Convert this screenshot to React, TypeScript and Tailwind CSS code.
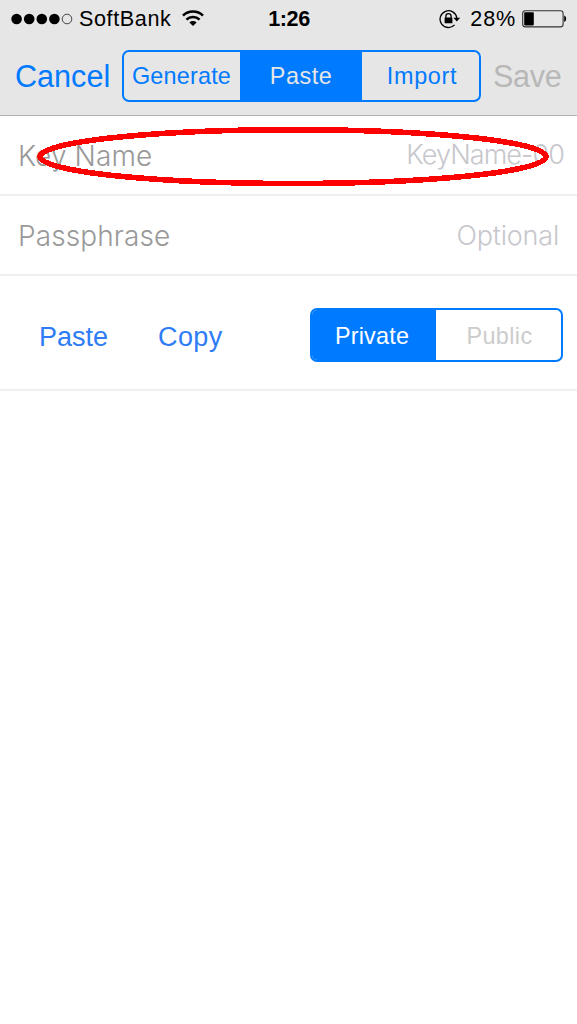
import React from 'react';

interface SegmentProps {
  label: string;
  className: string;
}

const Segment: React.FC<SegmentProps> = ({ label, className }) => (
  <button className={`flex h-full items-center justify-center text-[23.4px] ${className}`}>
    {label}
  </button>
);

const StatusBar: React.FC = () => (
  <div className="grid h-[38px] grid-cols-3 items-center pl-[11px] pr-[10px] text-[21.6px] text-black">
    {/* Carrier */}
    <div className="flex items-center">
      <svg width="62" height="12" viewBox="0 0 62 12" className="shrink-0">
        <circle cx="5.6" cy="6" r="5.3" />
        <circle cx="18.2" cy="6" r="5.3" />
        <circle cx="30.8" cy="6" r="5.3" />
        <circle cx="43.4" cy="6" r="5.3" />
        <circle cx="56" cy="6" r="4.8" fill="none" stroke="#333" strokeWidth="0.9" />
      </svg>
      <span className="ml-[6px] pt-px tracking-[0.6px]">SoftBank</span>
      <svg width="22" height="17" viewBox="0 0 22 17" className="ml-[11px] shrink-0" fill="none" stroke="#000" strokeWidth="2.5">
        <path d="M1 5.6a14.3 14.3 0 0 1 20 0" />
        <path d="M4.4 9.6a9.4 9.4 0 0 1 13.2 0" />
        <path d="M7.4 12.4a5.2 5.2 0 0 1 7.2 0L11 16z" fill="#000" stroke="none" />
      </svg>
    </div>

    <span className="pt-px text-center font-bold tracking-[-0.4px]">1:26</span>

    {/* Rotation lock and battery */}
    <div className="flex items-center justify-end">
      <svg width="22" height="20" viewBox="0 0 22 20" className="shrink-0" fill="none" stroke="#000">
        <path d="M15.6 15.9A8.4 8.4 0 1 1 17.8 9" strokeWidth="1.3" />
        <path d="M14.4 8.8h6.8l-3.4 3.6z" fill="#000" stroke="none" />
        <path d="M6.9 9V7.2a2.6 2.6 0 0 1 5.2 0V9" strokeWidth="1.3" />
        <rect x="5.6" y="8.4" width="7.8" height="5.9" rx="0.6" fill="#000" stroke="none" />
      </svg>
      <span className="ml-[9px] pt-px tracking-[0.8px]">28%</span>
      <svg width="45" height="18" viewBox="0 0 45 18" className="ml-[6px] shrink-0">
        <rect x="0.7" y="0.7" width="40.4" height="16.2" rx="2.6" fill="none" stroke="#333" strokeWidth="1.1" />
        <rect x="2.2" y="2.2" width="9.6" height="13.2" rx="0.8" />
        <path d="M42.2 5.6c2.6.6 2.6 5.8 0 6.4z" />
      </svg>
    </div>
  </div>
);

const Toolbar: React.FC = () => (
  <div className="flex h-[76px] items-center text-[30.6px]">
    <button className="ml-[15px] w-[107px] pt-[2px] text-left text-[#007aff]">Cancel</button>
    <div className="flex h-[52px] w-[359px] overflow-hidden rounded-[7px] border-2 border-[#007aff]">
      <Segment label="Generate" className="w-[116px] pr-px pt-[2px] text-[#007aff] tracking-[0.2px]" />
      <Segment label="Paste" className="w-[122px] bg-[#007aff] pt-[2px] text-[#e6e6e6] tracking-[0.5px]" />
      <Segment label="Import" className="w-[117px] pl-[3px] pt-[2px] text-[#007aff] tracking-[0.7px]" />
    </div>
    <button className="ml-[12px] pt-[2px] text-[#b8b8b8] tracking-[-0.3px]">Save</button>
  </div>
);

const App: React.FC = () => {
  return (
    <div className="relative h-[1024px] w-[577px] overflow-hidden bg-white font-['Liberation_Sans',Arial,sans-serif]">
      <header className="h-[116px] border-b border-[#b2b2b2] bg-[#e6e6e6]">
        <StatusBar />
        <Toolbar />
      </header>

      <main>
        <div className="flex h-[80px] items-center justify-between border-b-2 border-[#efeff4] pl-[18px] pr-[13px] font-['Inter',sans-serif] font-light">
          <label className="pt-[2px] text-[28px] text-[#999999] tracking-[0.1px]">Key Name</label>
          <span className="text-[27px] text-[#c7c7cc] tracking-[-0.9px]">KeyName-00</span>
        </div>
        <div className="flex h-[79.5px] items-center justify-between border-b-2 border-[#efeff4] pl-[18px] pr-[18px] font-['Inter',sans-serif] font-light">
          <label className="pt-[2px] text-[28px] text-[#999999] tracking-[0.1px]">Passphrase</label>
          <span className="pt-[2px] text-[27px] text-[#c7c7cc] tracking-[-0.2px]">Optional</span>
        </div>
        <div className="flex h-[115.5px] items-center border-b-2 border-[#efeff4] pl-[39px] pt-[6px]">
          <button className="w-[119px] pt-[4px] text-left text-[27px] text-[#2e7cf6]">Paste</button>
          <button className="w-[152px] pt-[4px] text-left text-[27px] text-[#2e7cf6] tracking-[0.4px]">Copy</button>
          <div className="flex h-[54px] w-[253px] overflow-hidden rounded-[7px] border-2 border-[#007aff]">
            <Segment label="Private" className="w-[124px] bg-[#007aff] pr-[4px] pt-[2px] text-white tracking-[0.2px]" />
            <Segment label="Public" className="w-[125px] pt-[2px] pl-[2px] text-[#cccccc] tracking-[0.4px]" />
          </div>
        </div>
      </main>

      {/* Hand-drawn highlight over the key name row */}
      <svg width="577" height="70" viewBox="0 0 577 70" className="pointer-events-none absolute left-0 top-[122px]">
        <ellipse cx="293" cy="34.6" rx="253" ry="26.9" fill="none" stroke="#ff0000" strokeWidth="5.6" shapeRendering="crispEdges" />
      </svg>
    </div>
  );
};

export default App;
